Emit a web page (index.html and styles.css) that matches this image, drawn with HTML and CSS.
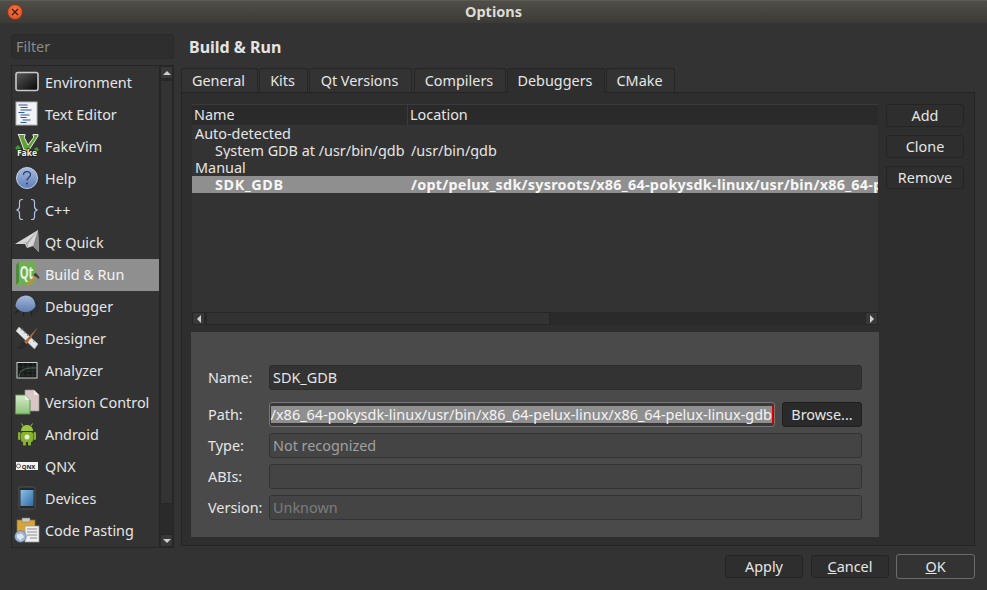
FILE: index.html
```html
<!DOCTYPE html>
<html>
<head>
  <title>Options</title>
  <link rel="stylesheet" href="styles.css">
</head>
<body>
  <div class="titlebar">
    <span class="close-btn">
      <svg width="14" height="14" viewBox="0 0 14 14"><path d="M4 4l6 6M10 4l-6 6" stroke="#4a1a08" stroke-width="1.400" fill="none"/></svg>
    </span>
    <span class="title">Options</span>
  </div>

  <div class="main">
    <div class="sidebar">
      <div class="filter">Filter</div>
      <div class="category-box">
        <ul class="category-list">
          <li>
            <svg class="cat-icon" viewBox="0 0 32 32"><defs><linearGradient id="envG" x1="0" y1="0" x2="1" y2="1"><stop offset="0" stop-color="#5a5a5a"/><stop offset="1" stop-color="#050505"/></linearGradient></defs><rect x="4" y="5.500" width="22" height="18" rx="2" fill="url(#envG)" stroke="#c9c9c9" stroke-width="1.600"/></svg>
            Environment
          </li>
          <li>
            <svg class="cat-icon" viewBox="0 0 32 32"><rect x="4" y="3" width="21" height="23" fill="#f1f3f6" stroke="#b5b5b5"/><path d="M6.500 6h9M8.500 8.500h7M8.500 11h11M6.500 13.500h6M8.500 16h9M8.500 18.500h6M10.500 21h8M8.500 23.500h6" stroke="#2f58a8" stroke-width="1.200"/></svg>
            Text Editor
          </li>
          <li>
            <svg class="cat-icon" viewBox="0 0 32 32"><path d="M3 17l3-3 3 3-3 3zM22 18l3-2 2 3-3 2z" fill="#3d9a2a"/><path d="M6 3.500h7v1.500l-1 1 4 8 6-8-1-1V3.500h5V5L17 19h-5L7 5z" fill="#5ba32a" stroke="#e6e6e6"/><text x="15" y="25" class="fake-text">Fake</text></svg>
            FakeVim
          </li>
          <li>
            <svg class="cat-icon" viewBox="0 0 32 32"><defs><linearGradient id="helpG" x1="0" y1="0" x2="0" y2="1"><stop offset="0" stop-color="#a9bde0"/><stop offset="1" stop-color="#5d7cb8"/></linearGradient></defs><circle cx="15" cy="15" r="10.500" fill="url(#helpG)" stroke="#c3cfe6"/><path d="M11.500 12c0-4.500 7-4.500 7-.5 0 3-3.500 3-3.500 6" fill="none" stroke="#2b3d6b" stroke-width="1.300"/><circle cx="15" cy="20.500" r="1" fill="#2b3d6b"/></svg>
            Help
          </li>
          <li>
            <svg class="cat-icon" viewBox="0 0 32 32"><path d="M11 4.500H10c-2 0-2.500 1-2.500 2.500v4.500c0 2-1 3-3 3.500 2 .5 3 1.500 3 3.500v3.500c0 1.500.5 2.500 2.500 2.500h1M19 4.500h1c2 0 2.500 1 2.500 2.500v4.500c0 2 1 3 3 3.500-2 .5-3 1.500-3 3.500v3.500c0 1.500-.5 2.500-2.500 2.500h-1" fill="none" stroke="#a9c1e6" stroke-width="1.200"/></svg>
            C++
          </li>
          <li>
            <svg class="cat-icon" viewBox="0 0 32 32"><path d="M3 17L26 3l1 22-6-6-6 2-2-4z" fill="#d6d6d6"/><path d="M3 17l12-2 11-12-10 14v4l-3-6z" fill="#a8a8a8"/><path d="M21 19l6 6-1-22z" fill="#8a8a8a"/></svg>
            Qt Quick
          </li>
          <li class="selected">
            <svg class="cat-icon" viewBox="0 0 32 32"><path d="M7 3h17v18l-4 5H5V5z" fill="#6fae52"/><path d="M4 6l3-3v20l-3 3z" fill="#4f8a3b"/><text class="qt-text" transform="translate(14.500 20) scale(.8 1.250)">Qt</text><path d="M14 26.500l9-10.500 1.500 1.200-9 10.500z" fill="#d8854a"/><path d="M21.500 15l2.500-1 3.500 4.500-1 1.500-2.500-2.500-1 .5z" fill="#3b3b3b"/></svg>
            Build &amp; Run
          </li>
          <li>
            <svg class="cat-icon" viewBox="0 0 32 32"><defs><linearGradient id="bugG" x1="0" y1="0" x2="0" y2="1"><stop offset="0" stop-color="#a5b9de"/><stop offset="1" stop-color="#5f7dad"/></linearGradient></defs><path d="M7 19l-4 3M12 21l-1 4M19 21l1 4" stroke="#222" stroke-width="1.200"/><ellipse cx="22.500" cy="16" rx="5" ry="6" fill="#2a2f3a"/><path d="M3.500 15C4 8 9 4.500 14 4.500s9 4 9.500 10.500c-2 4-6 6-10 6s-8-2-10-6z" fill="url(#bugG)"/><path d="M24 10l3 3" stroke="#222"/></svg>
            Debugger
          </li>
          <li>
            <svg class="cat-icon" viewBox="0 0 32 32"><path d="M7 4l19 17-3.500 5L4 8z" fill="#e4e7ea" stroke="#aab0b6" stroke-width=".6"/><path d="M9 7.500l2-2M12 10.500l2-2M15 13l2-2M18 16l2-2M21 19l2-2" stroke="#777" stroke-width=".8"/><path d="M26 4L12 19l2.500 2.500z" fill="#b46a32"/><path d="M11.500 18.500l3.500 3.500-3 3.500-8 .5c3-1 4-5 7.500-7.500z" fill="#2b2b2b"/></svg>
            Designer
          </li>
          <li>
            <svg class="cat-icon" viewBox="0 0 32 32"><rect x="5" y="7.500" width="20" height="15.500" fill="#161a18" stroke="#cfcfcf"/><path d="M6 12h18M6 16h18M6 20h18M11 8v14M16 8v14M21 8v14" stroke="#33403a" stroke-width=".6"/><path d="M7 22c1-6 3-7 6-8s6-1 11-1" stroke="#6f8a78" fill="none" stroke-width=".7"/></svg>
            Analyzer
          </li>
          <li>
            <svg class="cat-icon" viewBox="0 0 32 32"><path d="M13 3h9l5 5v16H13z" fill="#d8c6c6" stroke="#9c9090" stroke-width=".7"/><path d="M22 3v5h5z" fill="#efe6e6"/><defs><linearGradient id="vcG" x1="0" y1="0" x2="0" y2="1"><stop offset="0" stop-color="#d7ebc9"/><stop offset="1" stop-color="#8cc47a"/></linearGradient></defs><path d="M3.500 8H13l5 5v14H3.500z" fill="url(#vcG)" stroke="#5d8f4f"/><path d="M13 8v5h5z" fill="#e9f5e1"/></svg>
            Version Control
          </li>
          <li>
            <svg class="cat-icon" viewBox="0 0 32 32"><path d="M9 12c0-4 3-6 6-6s6 2 6 6z" fill="#9cc43c"/><path d="M11 7L9.500 4.500M19 7l1.500-2.500" stroke="#9cc43c"/><rect x="9" y="13" width="12" height="10" rx="2" fill="#86b22e"/><rect x="6" y="13" width="2.500" height="8" rx="1.200" fill="#86b22e"/><rect x="21.500" y="13" width="2.500" height="8" rx="1.200" fill="#86b22e"/><rect x="11" y="22" width="3" height="4.500" rx="1" fill="#86b22e"/><rect x="16" y="22" width="3" height="4.500" rx="1" fill="#86b22e"/><circle cx="15" cy="18" r="2.500" fill="#e8efd6"/></svg>
            Android
          </li>
          <li>
            <svg class="cat-icon" viewBox="0 0 32 32"><rect x="4" y="11" width="22" height="8" fill="#f4f4f4"/><text x="16.500" y="17.600" class="qnx-text">QNX</text><circle cx="6.500" cy="15" r="2" fill="none" stroke="#444" stroke-width=".8"/></svg>
            QNX
          </li>
          <li>
            <svg class="cat-icon" viewBox="0 0 32 32"><defs><linearGradient id="devG" x1="0" y1="0" x2="1" y2="1"><stop offset="0" stop-color="#8fc0e6"/><stop offset="1" stop-color="#2a6aa6"/></linearGradient></defs><rect x="7" y="4" width="16" height="22" rx="1.500" fill="#25282c" stroke="#555"/><rect x="8.500" y="7" width="13" height="16" fill="url(#devG)"/></svg>
            Devices
          </li>
          <li>
            <svg class="cat-icon" viewBox="0 0 32 32"><rect x="5" y="5" width="18" height="19" fill="#d6a63c" stroke="#8d6b22" stroke-width=".7"/><rect x="10" y="3" width="8" height="4" fill="#c9c9c9" stroke="#777" stroke-width=".5"/><rect x="13" y="11" width="14" height="16" fill="#eeeeee" stroke="#9a9a9a" stroke-width=".7"/><path d="M15 14h10M15 17h10M15 20h10M18 23h7" stroke="#777" stroke-width=".8"/><circle cx="8.500" cy="21.500" r="5.800" fill="#9db4d6" stroke="#5c6f90" stroke-width=".6"/><path d="M5 19c2 1 3 0 4-1 1 2 3 2 3 4-1 2-3 1-3 4-2-1-2-3-4-3z" fill="#dfe6f0"/></svg>
            Code Pasting
          </li>
        </ul>
        <div class="vscroll">
          <span class="scroll-btn"><i class="arrow-up"></i></span>
          <span class="vscroll-handle"></span>
          <span class="vscroll-track"></span>
          <span class="scroll-btn"><i class="arrow-down"></i></span>
        </div>
      </div>
    </div>

    <div class="content">
      <h2>Build &amp; Run</h2>
      <div class="tabs">
        <span class="tab tab-general">General</span>
        <span class="tab tab-kits">Kits</span>
        <span class="tab tab-qt">Qt Versions</span>
        <span class="tab tab-compilers">Compilers</span>
        <span class="tab tab-debuggers active">Debuggers</span>
        <span class="tab tab-cmake">CMake</span>
      </div>
      <div class="tab-pane">
        <div class="left-col">
          <div class="table">
            <div class="table-head">
              <span class="col-name">Name</span>
              <span class="col-loc">Location</span>
            </div>
            <div class="table-body">
              <div class="row group">Auto-detected</div>
              <div class="row"><span class="col-name sub">System GDB at /usr/bin/gdb</span><span class="col-loc">/usr/bin/gdb</span></div>
              <div class="row group">Manual</div>
              <div class="row row-selected"><span class="col-name sub">SDK_GDB</span><span class="col-loc">/opt/pelux_sdk/sysroots/x86_64-pokysdk-linux/usr/bin/x86_64-pelux-linux/x86_64-pelux-linux-gdb</span></div>
            </div>
            <div class="hscroll">
              <span class="scroll-btn"><i class="arrow-left"></i></span>
              <span class="hscroll-handle"></span>
              <span class="hscroll-track"></span>
              <span class="scroll-btn"><i class="arrow-right"></i></span>
            </div>
          </div>

          <div class="details">
            <div class="form-row">
              <label>Name:</label>
              <div class="field">SDK_GDB</div>
            </div>
            <div class="form-row path-row">
              <label>Path:</label>
              <div class="field field-path"><span class="path-sel">/x86_64-pokysdk-linux/usr/bin/x86_64-pelux-linux/x86_64-pelux-linux-gdb</span></div>
              <button class="btn browse">Browse...</button>
            </div>
            <div class="form-row">
              <label>Type:</label>
              <div class="field field-off type-text">Not recognized</div>
            </div>
            <div class="form-row">
              <label>ABIs:</label>
              <div class="field field-off"></div>
            </div>
            <div class="form-row">
              <label>Version:</label>
              <div class="field field-off version-text">Unknown</div>
            </div>
          </div>
        </div>

        <div class="side-buttons">
          <button class="btn">Add</button>
          <button class="btn">Clone</button>
          <button class="btn">Remove</button>
        </div>
      </div>
    </div>
  </div>

  <div class="footer">
    <button class="btn">Apply</button>
    <button class="btn"><u>C</u>ancel</button>
    <button class="btn btn-default"><u>O</u>K</button>
  </div>
</body>
</html>
```

FILE: styles.css
```css
* {
  box-sizing: border-box;
}

html, body {
  margin: 0;
  height: 100%;
}

body {
  width: 987px;
  height: 590px;
  overflow: hidden;
  background-color: #333333;
  color: #e6e6e6;
  font-family: "Noto Sans", "Open Sans", sans-serif;
  font-size: 14.4px;
}

.titlebar {
  height: 23px;
  padding-bottom: 2px;
  display: flex;
  align-items: center;
  justify-content: center;
  position: relative;
  background: linear-gradient(#4f4e48, #3b3a36);
  border-top: 1px solid #5c5b54;
}

.title {
  font-weight: bold;
  font-size: 14.5px;
  color: #dfdbd2;
}

.close-btn {
  position: absolute;
  left: 7px;
  top: 3px;
  width: 16px;
  height: 16px;
  border-radius: 50%;
  background: radial-gradient(circle at 50% 40%, #f2794c, #d9481c);
  border: 1px solid #8f3414;
  display: flex;
  align-items: center;
  justify-content: center;
}

.main {
  display: flex;
  height: 525px;
  padding: 11px 12px 0 11px;
}

.sidebar {
  width: 163px;
  display: flex;
  flex-direction: column;
  gap: 6px;
}

.filter {
  height: 25px;
  padding-left: 4px;
  line-height: 23px;
  color: #8a8a8a;
  background-color: #2e2e2e;
  border: 1px solid #2a2a2a;
  border-radius: 3px;
}

.category-box {
  height: 483px;
  display: flex;
  background-color: #333333;
  border: 1px solid #262626;
}

.category-list {
  flex: 1;
  margin: 1px 0 0;
  padding: 0;
  list-style: none;
}

.category-list li {
  height: 32px;
  display: flex;
  align-items: center;
  gap: 1px;
  padding-bottom: 1px;
}

.category-list li.selected {
  background-color: #8f8f8f;
  color: #f4f4f4;
}

.cat-icon {
  width: 32px;
  height: 32px;
  flex: none;
}

.fake-text {
  font-size: 8.500px;
  font-weight: bold;
  fill: #f2f2f2;
  stroke: #222222;
  stroke-width: 1.500px;
  paint-order: stroke;
  text-anchor: middle;
}

.qt-text {
  font-size: 14px;
  font-weight: bold;
  fill: #e6f3dc;
  text-anchor: middle;
}

.qnx-text {
  font-size: 6px;
  font-weight: bold;
  fill: #222222;
  text-anchor: middle;
}

.vscroll {
  width: 14px;
  display: flex;
  flex-direction: column;
  border-left: 1px solid #262626;
  background-color: #2a2a2a;
}

.vscroll-handle {
  height: 424px;
  margin-top: 1px;
  background-color: #333333;
  border: 1px solid #262626;
  border-radius: 1px;
}

.vscroll-track {
  flex: 1;
}

.scroll-btn {
  flex: none;
  width: 13px;
  height: 13px;
  display: flex;
  align-items: center;
  justify-content: center;
  background-color: #383838;
  border: 1px solid #262626;
}

.arrow-up, .arrow-down, .arrow-left, .arrow-right {
  display: block;
  width: 0;
  height: 0;
  border-style: solid;
  border-color: transparent;
}

.arrow-up {
  border-width: 0 4px 4px;
  border-bottom-color: #cfcfcf;
}

.arrow-down {
  border-width: 4px 4px 0;
  border-top-color: #cfcfcf;
}

.arrow-left {
  border-width: 4px 4px 4px 0;
  border-right-color: #cfcfcf;
}

.arrow-right {
  border-width: 4px 0 4px 4px;
  border-left-color: #cfcfcf;
}

.content {
  width: 794px;
  margin-left: 7px;
  display: flex;
  flex-direction: column;
}

h2 {
  height: 34px;
  margin: 0;
  padding-left: 8px;
  line-height: 26px;
  font-size: 16px;
  font-weight: bold;
  color: #e4e4e4;
}

.tabs {
  height: 24px;
  display: flex;
}

.tab {
  height: 24px;
  margin-right: 1px;
  padding-right: 2px;
  text-align: center;
  line-height: 23px;
  background-color: #333333;
  border: 1px solid #262626;
  border-bottom: none;
  border-radius: 3px 3px 0 0;
}

.tab-general { width: 77px; }
.tab-kits { width: 49px; }
.tab-qt { width: 103px; margin-right: 2px; }
.tab-compilers { width: 92px; }
.tab-debuggers { width: 98px; }
.tab-cmake { width: 69px; }

.tab.active {
  background-color: #2e2e2e;
  height: 25px;
  position: relative;
  z-index: 1;
}

.tab-pane {
  height: 454px;
  display: flex;
  gap: 8px;
  padding: 11px 10px 0;
  background-color: #2e2e2e;
  border: 1px solid #232323;
}

.left-col {
  width: 686px;
  display: flex;
  flex-direction: column;
  gap: 7px;
}

.table {
  height: 221px;
  display: flex;
  flex-direction: column;
  background-color: #333333;
}

.table-head {
  height: 21px;
  flex: none;
  display: flex;
  line-height: 20px;
  background-color: #2a2a2a;
  border-top: 1px solid #3a3a3a;
}

.table-head .col-name {
  width: 215px;
  padding-left: 2px;
}

.table-head .col-loc {
  padding-left: 2px;
  border-left: 1px solid #3a3a3a;
}

.table-body {
  flex: 1;
  overflow: hidden;
}

.row {
  height: 17px;
  display: flex;
  line-height: 17px;
  white-space: nowrap;
  overflow: hidden;
}

.row.group {
  padding-left: 3px;
}

.row .col-name {
  width: 216px;
  flex: none;
}

.row .sub {
  padding-left: 23px;
  white-space: nowrap;
}

.row .col-loc {
  flex: 1;
  min-width: 0;
  overflow: hidden;
  padding-left: 3px;
}

.row-selected {
  background-color: #8f8f8f;
  color: #f6f6f6;
  font-weight: bold;
  letter-spacing: 0.25px;
}

.row-selected .sub {
  letter-spacing: 0.6px;
}

.hscroll {
  height: 13px;
  flex: none;
  display: flex;
  background-color: #2a2a2a;
}

.hscroll-handle {
  width: 344px;
  margin-left: 1px;
  background-color: #333333;
  border: 1px solid #262626;
}

.hscroll-track {
  flex: 1;
}

.details {
  height: 205px;
  margin: 0 -1px;
  padding: 33px 17px 0;
  display: flex;
  flex-direction: column;
  gap: 6px;
  background-color: #4a4a4a;
}

.form-row {
  height: 25px;
  display: flex;
  align-items: center;
  gap: 7px;
}

.form-row label {
  width: 54px;
  flex: none;
  padding-bottom: 1px;
}

.path-row {
  margin-top: 6px;
}

.field {
  flex: 1;
  min-width: 0;
  height: 25px;
  padding-left: 3px;
  line-height: 23px;
  background-color: #333333;
  border: 1px solid #2c2c2c;
  border-radius: 3px;
  overflow: hidden;
  white-space: nowrap;
}

.field-off {
  background-color: #444444;
  border-color: #333333;
}

.type-text {
  color: #a0a0a0;
}

.version-text {
  color: #7c7c7c;
}

.field-path {
  flex: none;
  width: 506px;
  padding: 0;
  display: flex;
  align-items: center;
  justify-content: flex-end;
  background-color: #383838;
  border-color: #777777;
}

.path-sel {
  flex: none;
  height: 17px;
  line-height: 17px;
  margin-right: 1px;
  letter-spacing: 0.04px;
  background-color: #8f8f8f;
  border-right: 1px solid #e00000;
  color: #f4f4f4;
}

.btn {
  height: 23px;
  width: 78px;
  padding: 0;
  font-family: inherit;
  font-size: 14.4px;
  line-height: 20px;
  color: #e6e6e6;
  background-color: #2e2e2e;
  border: 1px solid #242424;
  border-radius: 3px;
}

.browse {
  width: 80px;
  height: 25px;
  background-color: #2a2a2a;
  border-color: #1f1f1f;
}

.side-buttons {
  display: flex;
  flex-direction: column;
  gap: 8px;
}

.footer {
  display: flex;
  justify-content: flex-end;
  align-items: center;
  gap: 8px;
  height: 25px;
  margin-top: 6px;
  padding-right: 12px;
}

.btn-default {
  width: 79px;
  height: 25px;
  margin-left: -1px;
  background-color: #333333;
  border-color: #6b6b6b;
}
```
